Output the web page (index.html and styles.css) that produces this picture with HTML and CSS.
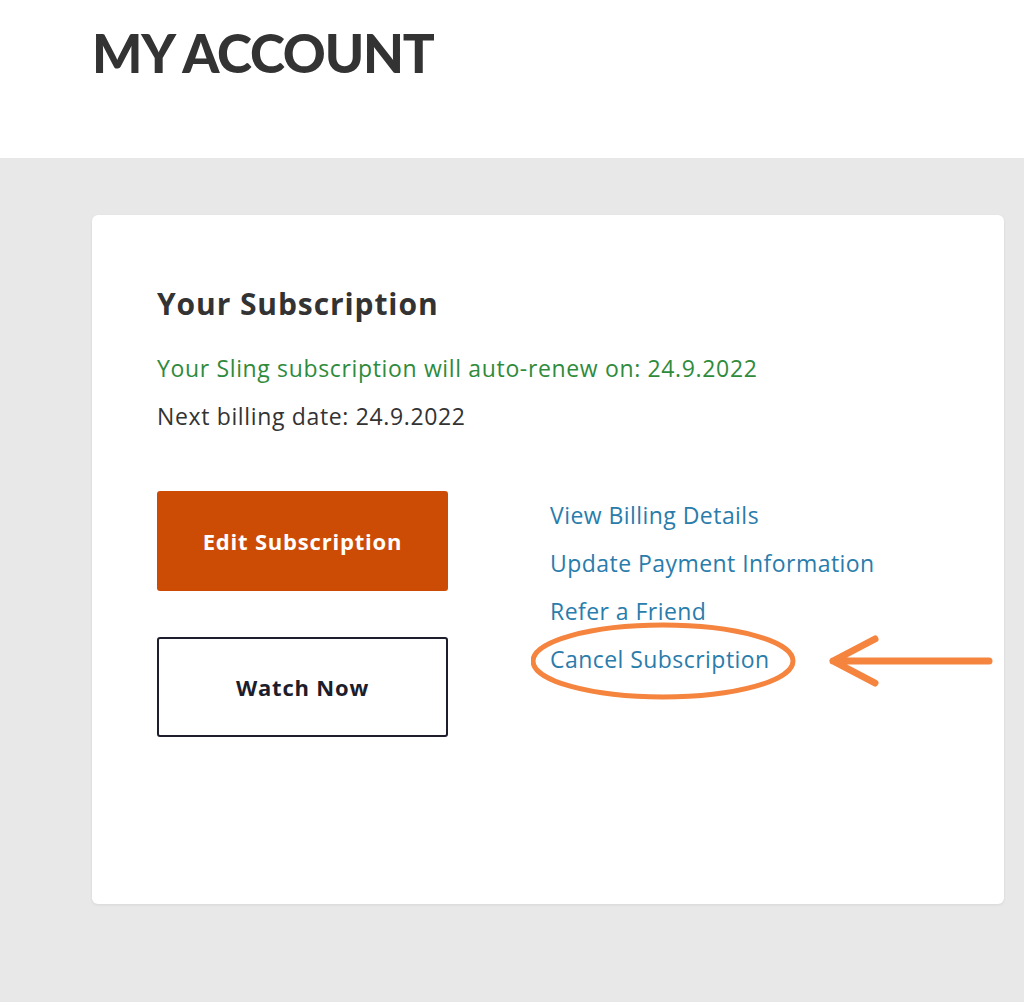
FILE: index.html
```html
<!DOCTYPE html>
<html lang="en">
<head>
    <meta charset="UTF-8">
    <meta name="viewport" content="width=device-width, initial-scale=1.0">
    <title>My Account</title>
    <link rel="stylesheet" href="styles.css">
</head>
<body>
    <header class="page-header">
        <h1>MY ACCOUNT</h1>
    </header>

    <main class="page-body">
        <div class="card">
            <h2>Your Subscription</h2>
            <p class="renew">Your Sling subscription will auto-renew on: 24.9.2022</p>
            <p class="billing">Next billing date: 24.9.2022</p>

            <div class="actions">
                <div class="buttons">
                    <a class="btn btn-primary" href="#">Edit Subscription</a>
                    <a class="btn btn-outline" href="#">Watch Now</a>
                </div>

                <ul class="links">
                    <li><a href="#">View Billing Details</a></li>
                    <li><a href="#">Update Payment Information</a></li>
                    <li><a href="#">Refer a Friend</a></li>
                    <li class="highlight">
                        <a href="#">Cancel Subscription</a>
                        <!-- hand drawn annotation -->
                        <svg class="annotation" width="480" height="100" viewBox="0 0 480 100">
                            <ellipse cx="132" cy="44" rx="130" ry="36" fill="none" stroke="#f5843f" stroke-width="5"/>
                            <path d="M458 44 L302 44 M344 22 L302 44 L344 66" fill="none" stroke="#f5843f" stroke-width="7" stroke-linecap="round" stroke-linejoin="round"/>
                        </svg>
                    </li>
                </ul>
            </div>
        </div>
    </main>
</body>
</html>
```

FILE: styles.css
```css
body {
    margin: 0;
    font-family: "Open Sans", "Liberation Sans", Arial, sans-serif;
    color: #333;
    background-color: #e8e8e8;
}

.page-header {
    background-color: #fff;
    height: 158px;
    padding-left: 92px;
    box-sizing: border-box;
    padding-top: 26px;
}

h1 {
    margin: 0;
    font-family: Lato, "Liberation Sans", Arial, sans-serif;
    font-size: 53px;
    line-height: 54px;
    font-weight: 900;
    color: #333;
    letter-spacing: -1.2px;
}

.page-body {
    padding: 57px 20px 96px 92px;
}

.card {
    width: 912px;
    height: 689px;
    box-sizing: border-box;
    background-color: #fff;
    border-radius: 6px;
    box-shadow: 0 1px 3px rgba(0, 0, 0, 0.08);
    padding: 70px 65px 0;
}

h2 {
    margin: 0;
    font-size: 30px;
    line-height: 38px;
    font-weight: 700;
    letter-spacing: 0.9px;
    color: #333;
}

.renew,
.billing {
    margin: 0;
    font-size: 23px;
    line-height: 28px;
    letter-spacing: 0.65px;
}

.renew {
    margin-top: 31px;
    color: #2f8b3c;
}

.billing {
    margin-top: 20px;
    color: #333;
}

.actions {
    display: flex;
    margin-top: 61px;
    gap: 102px;
}

.buttons {
    display: flex;
    flex-direction: column;
    gap: 46px;
    width: 291px;
}

.btn {
    display: flex;
    align-items: center;
    justify-content: center;
    height: 100px;
    box-sizing: border-box;
    border-radius: 3px;
    font-size: 22px;
    font-weight: 700;
    letter-spacing: 0.8px;
    text-decoration: none;
}

.btn-primary {
    background-color: #cd4c05;
    color: #fff;
}

.btn-outline {
    border: 2px solid #1d1d2b;
    color: #1d1d2b;
}

.links {
    list-style: none;
    margin: 0;
    padding: 0;
    display: flex;
    flex-direction: column;
    gap: 20px;
    margin-top: 10px;
}

.links li {
    font-size: 23px;
    line-height: 28px;
    letter-spacing: 0.45px;
}

.links a {
    color: #2a7cab;
    text-decoration: none;
}

.highlight {
    position: relative;
}

.annotation {
    position: absolute;
    left: -19px;
    top: -28px;
}
```
